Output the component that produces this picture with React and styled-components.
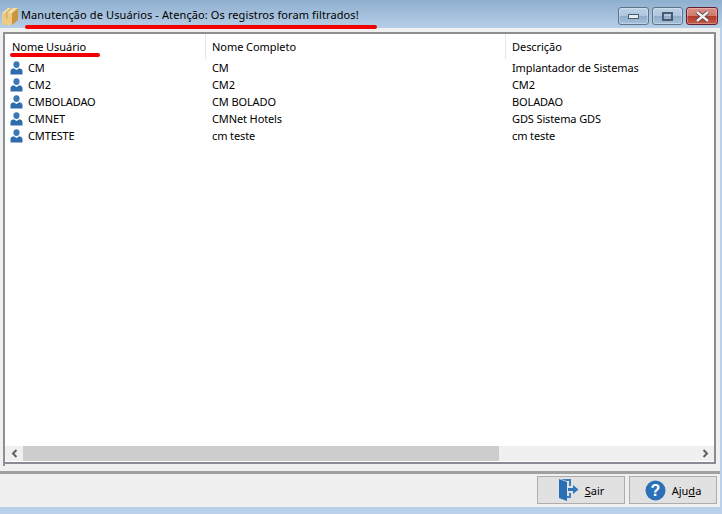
import React from "react";
import styled, { createGlobalStyle } from "styled-components";

const Global = createGlobalStyle`
  html, body { margin: 0; padding: 0; width: 722px; height: 514px; overflow: hidden; background: #b9d1ea; }
  * { box-sizing: border-box; }
`;

const Win = styled.div`
  width: 722px; height: 514px; display: flex; flex-direction: column;
  font-family: "Noto Sans", Tahoma, sans-serif; font-size: 11px; color: #000;
  background: #b9d1ea;
`;
const TitleBar = styled.div`
  height: 28px; flex: none; display: flex; align-items: flex-start; padding: 7px 4px 0 1px;
  background: linear-gradient(#8fafcf, #b6cee7);
  position: relative;
`;
const TitleText = styled.span`
  margin-left: 2px; font-size: 11px; letter-spacing: .105px; white-space: nowrap;
`;
const TitleMark = styled.div`
  position: absolute; left: 25px; top: 25px; width: 352px; height: 4px; border-radius: 2px; background: #f00000; z-index: 1;
`;
const WinButtons = styled.div`
  margin-left: auto; display: flex; gap: 3px;
`;
const WinBtn = styled.div`
  width: ${p => p.$close ? 32 : 31}px; height: 18px; border-radius: 3px; display: flex; align-items: center; justify-content: center;
  border: 1px solid ${p => p.$close ? "#5e2030" : "#5f7488"};
  background: ${p => p.$close
    ? "linear-gradient(#dc8f84 0%, #cf7a6e 48%, #b23a2a 52%, #c65a48 100%)"
    : "linear-gradient(#bcd1e7 0%, #adc6e0 48%, #8faccb 52%, #a6c1dc 100%)"};
  box-shadow: inset 0 0 0 1px rgba(255,255,255,.3);
`;
const Body = styled.div`
  flex: 1; min-height: 0; background: #f0f0f0; display: flex; flex-direction: column; margin-right: 2px;
`;
const Panel = styled.div`
  margin: 4px 4px 0 3px; height: 434px; display: flex; flex-direction: column;
  border-left: 2px solid #8f8f96;
`;
const PanelInner = styled.div`
  height: 432px; display: flex; flex-direction: column; background: #fff;
  border-top: 2px solid #909090; border-right: 2px solid #8c8c8c; border-bottom: 2px solid #8a8a94;
`;
const HeaderRow = styled.div`
  display: flex; height: 25px; flex: none;
`;
const HeadCell = styled.div`
  width: ${p => p.$w}px; flex: none; padding: 5px 0 0 ${p => p.$pl}px; letter-spacing: -.05px; color: #000;
  border-right: ${p => p.$last ? "none" : "1px solid #e6e6e6"}; position: relative;
`;
const HeadMark = styled.div`
  position: absolute; left: 5px; top: 19px; width: 90px; height: 4px; border-radius: 2px; background: #f00000;
`;
const Rows = styled.div`
  flex: 1; display: flex; flex-direction: column;
`;
const Row = styled.div`
  display: flex; height: 17px; align-items: center;
`;
const Cell = styled.div`
  width: ${p => p.$w}px; flex: none; padding-left: ${p => p.$pl}px; white-space: nowrap; display: flex; align-items: center;
  letter-spacing: -.12px;
`;
const RowLabel = styled.span` margin-left: 5px; `;
const ScrollBar = styled.div`
  height: 15px; flex: none; margin-bottom: 1px; background: #f0f0f0; display: flex; align-items: center;
`;
const ScrollArrow = styled.div`
  width: 18px; height: 15px; flex: none; display: flex; align-items: center; justify-content: center;
`;
const ScrollTrack = styled.div`
  flex: 1; height: 15px;
`;
const ScrollThumb = styled.div`
  width: 476px; height: 15px; background: #cdcdcd;
`;
const Footer = styled.div`
  margin-top: 5px; border-top: 3px solid #a0a0a0; flex: 1; background: #f0f0f0; display: flex; justify-content: flex-end;
  padding: 2px 3px 0 0; gap: 4px;
`;
const FootBtn = styled.div`
  width: 88px; height: 28px; border: 1px solid #adadad; background: #e1e1e1; display: flex; align-items: center; justify-content: center; gap: 6px;
`;
const U = styled.span` text-decoration: underline; `;
const BottomEdge = styled.div` height: 7px; flex: none; background: #b9d1ea; `;

const UserIcon = () => (
  <svg width="13" height="14" viewBox="0 0 13 14" style={{ flex: "none" }}>
    <ellipse cx="6.5" cy="3.6" rx="3.1" ry="3.4" fill="#3b78b8" />
    <path d="M0.5 13.5 V10.5 Q0.5 7.8 3.6 7.2 L6.5 9 L9.4 7.2 Q12.5 7.8 12.5 10.5 V13.5 Z" fill="#2f6cae" />
  </svg>
);
const BoxIcon = () => (
  <svg width="18" height="19" viewBox="0 0 18 19" style={{ flex: "none" }}>
    <path d="M1 6 L11 6 L11 18 L1 18 Z" fill="#eccb84" />
    <path d="M11 6 L17 1 L17 13 L11 18 Z" fill="#c9963f" />
    <path d="M1 6 L7 1 L17 1 L11 6 Z" fill="#f4deaa" />
    <path d="M4 6 L10 1 L12 1 L6 6 Z" fill="#d2ab66" />
    <path d="M5 6 H6.4 V12 H5 Z" fill="#d2ab66" />
  </svg>
);
const ExitIcon = () => (
  <svg width="21" height="24" viewBox="0 0 21 24" style={{ flex: "none" }}>
    <path d="M1 1 L9 4 V23 L1 20 Z" fill="#2a6fb5" />
    <path d="M3 1 H13 V8 H11 V3 H8 Z M9 18 H11 V15 H13 V20 H9 Z" fill="#3f7fbf" />
    <path d="M10 10 H15 V7 L20.5 11.5 L15 16 V13 H10 Z" fill="#2f76bd" />
  </svg>
);
const HelpIcon = () => (
  <svg width="21" height="21" viewBox="0 0 21 21" style={{ flex: "none" }}>
    <circle cx="10.5" cy="10.5" r="10" fill="#2c71b8" />
    <text x="10.5" y="16" textAnchor="middle" fontFamily="Liberation Sans, sans-serif" fontWeight="700" fontSize="16" fill="#fff">?</text>
  </svg>
);

const data = [
  ["CM", "CM", "Implantador de Sistemas"],
  ["CM2", "CM2", "CM2"],
  ["CMBOLADAO", "CM BOLADO", "BOLADAO"],
  ["CMNET", "CMNet Hotels", "GDS Sistema GDS"],
  ["CMTESTE", "cm teste", "cm teste"],
];

export default function App() {
  return (
    <Win>
      <Global />
      <TitleBar>
        <BoxIcon />
        <TitleText>Manutenção de Usuários - Atenção: Os registros foram filtrados!</TitleText>
        <TitleMark />
        <WinButtons>
          <WinBtn><svg width="11" height="5"><rect x=".5" y=".5" width="10" height="4" fill="#e8edf2" stroke="#4a5a6a" /></svg></WinBtn>
          <WinBtn><svg width="11" height="9"><rect x="1" y="1" width="9" height="7" fill="none" stroke="#4a5a6a" strokeWidth="2" /></svg></WinBtn>
          <WinBtn $close><svg width="15" height="11" viewBox="0 0 15 11"><path d="M2 1 L13 10 M13 1 L2 10" stroke="#4c3a44" strokeWidth="4" /><path d="M2 1 L13 10 M13 1 L2 10" stroke="#f0f0f0" strokeWidth="2.4" /></svg></WinBtn>
        </WinButtons>
      </TitleBar>
      <Body>
        <Panel>
          <PanelInner>
            <HeaderRow>
              <HeadCell $w={201} $pl={7}>Nome Usuário<HeadMark /></HeadCell>
              <HeadCell $w={300} $pl={6}>Nome Completo</HeadCell>
              <HeadCell $w={208} $pl={6} $last>Descrição</HeadCell>
            </HeaderRow>
            <Rows>
              {data.map(r => (
                <Row key={r[0]}>
                  <Cell $w={201} $pl={5}><UserIcon /><RowLabel>{r[0]}</RowLabel></Cell>
                  <Cell $w={300} $pl={6}>{r[1]}</Cell>
                  <Cell $w={208} $pl={6}>{r[2]}</Cell>
                </Row>
              ))}
            </Rows>
            <ScrollBar>
              <ScrollArrow><svg width="7" height="9" viewBox="0 0 7 9"><path d="M5.5 1 L2 4.5 L5.5 8" fill="none" stroke="#606060" strokeWidth="2" /></svg></ScrollArrow>
              <ScrollTrack><ScrollThumb /></ScrollTrack>
              <ScrollArrow><svg width="7" height="9" viewBox="0 0 7 9"><path d="M1.5 1 L5 4.5 L1.5 8" fill="none" stroke="#606060" strokeWidth="2" /></svg></ScrollArrow>
            </ScrollBar>
          </PanelInner>
        </Panel>
        <Footer>
          <FootBtn><ExitIcon /><span><U>S</U>air</span></FootBtn>
          <FootBtn><HelpIcon /><span>Aju<U>d</U>a</span></FootBtn>
        </Footer>
      </Body>
      <BottomEdge />
    </Win>
  );
}
